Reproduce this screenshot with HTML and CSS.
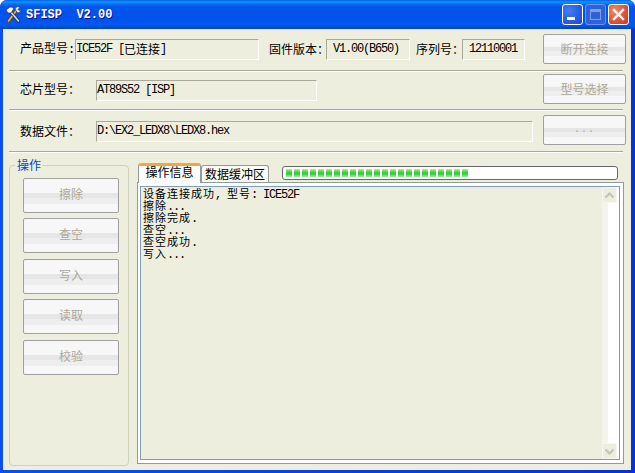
FILE: index.html
```html
<!DOCTYPE html>
<html lang="zh">
<head>
<meta charset="utf-8">
<title>SFISP V2.00</title>
<link rel="stylesheet" href="styles.css">
</head>
<body>
<div class="window">
  <header class="titlebar">
    <svg class="app-icon" width="17" height="17" viewBox="0 0 17 17">
      <path d="M3.5 15 L11 5" stroke="#5a4420" stroke-width="3.2" stroke-linecap="round"/>
      <path d="M3.5 15 L11 5" stroke="#f0b848" stroke-width="1.6" stroke-linecap="round"/>
      <path d="M5 5 L13.5 15" stroke="#2c3858" stroke-width="3.2" stroke-linecap="round"/>
      <path d="M5 5 L13.5 15" stroke="#d8dcea" stroke-width="1.5" stroke-linecap="round"/>
      <path d="M1 4 L5 1 L9 1.5 L8 4 L6 7 L3 7 Z" fill="#f4f4f8" stroke="#38445e" stroke-width=".8"/>
      <path d="M10 3 a3 3 0 0 1 5 -1.5 l-2 2 1 1 2 -1 a3 3 0 0 1 -4 3 Z" fill="#e8ebf4" stroke="#38445e" stroke-width=".8"/>
    </svg>
    <span class="app-title">SFISP  V2.00</span>
    <div class="win-buttons">
      <div class="win-btn win-min"><span class="min-glyph"></span></div>
      <div class="win-btn win-max"><span class="max-glyph"></span></div>
      <div class="win-btn win-close">
        <svg width="13" height="13" viewBox="0 0 13 13"><path d="M2 2 L11 11 M11 2 L2 11" stroke="#fff" stroke-width="2.4" stroke-linecap="square"/></svg>
      </div>
    </div>
  </header>

  <main class="client">
    <section class="row row-a">
      <span class="label w55">产品型号<span class="lat">:</span></span>
      <span class="field w184"><span class="lat">ICE52F [</span>已连接<span class="lat">]</span></span>
      <span class="label w57 ml10">固件版本：</span>
      <span class="field w84 pad6"><span class="lat">V1.00(B650)</span></span>
      <span class="label w46 ml6">序列号：</span>
      <span class="field w63 pad6"><span class="lat">12110001</span></span>
      <button class="btn btn-top" disabled>断开连接</button>
    </section>
    <hr class="sep">
    <section class="row row-b">
      <span class="label w76">芯片型号：</span>
      <span class="field w221"><span class="lat">AT89S52 [ISP]</span></span>
      <button class="btn btn-top" disabled>型号选择</button>
    </section>
    <hr class="sep">
    <section class="row row-c">
      <span class="label w76">数据文件：</span>
      <span class="field w437"><span class="lat">D:\EX2_LEDX8\LEDX8.hex</span></span>
      <button class="btn btn-top btn-dots" disabled>...</button>
    </section>
    <hr class="sep">

    <section class="lower">
      <fieldset class="group">
        <legend class="group-title">操作</legend>
        <button class="btn btn-op" disabled>擦除</button>
        <button class="btn btn-op" disabled>查空</button>
        <button class="btn btn-op" disabled>写入</button>
        <button class="btn btn-op" disabled>读取</button>
        <button class="btn btn-op" disabled>校验</button>
      </fieldset>

      <div class="tabs">
        <div class="tab-strip">
          <div class="tab tab-active">操作信息</div>
          <div class="tab tab-idle">数据缓冲区</div>
          <div class="progress"><div class="progress-fill"></div></div>
        </div>
        <div class="tab-panel">
          <div class="log-box">
            <div class="log-text">
              <div class="log-line">设备连接成功<span class="lat">, </span>型号<span class="lat">: ICE52F</span></div>
              <div class="log-line">擦除<span class="lat">...</span></div>
              <div class="log-line">擦除完成<span class="lat">.</span></div>
              <div class="log-line">查空<span class="lat">...</span></div>
              <div class="log-line">查空成功<span class="lat">.</span></div>
              <div class="log-line">写入<span class="lat">...</span></div>
            </div>
            <div class="scrollbar">
              <div class="sb-btn"><svg width="11" height="7" viewBox="0 0 11 7"><path d="M1.5 5.5 L5.5 1.5 L9.5 5.5" fill="none" stroke="#c4c3b8" stroke-width="2.2"/></svg></div>
              <div class="sb-track"></div>
              <div class="sb-btn"><svg width="11" height="7" viewBox="0 0 11 7"><path d="M1.5 1.5 L5.5 5.5 L9.5 1.5" fill="none" stroke="#c4c3b8" stroke-width="2.2"/></svg></div>
            </div>
          </div>
        </div>
      </div>
    </section>
  </main>
</div>
</body>
</html>
```
FILE: styles.css
```css
* { box-sizing: border-box; }
html, body { margin: 0; padding: 0; background: #fff; }
body { width: 635px; height: 473px; overflow: hidden; }

.window {
  width: 635px;
  height: 473px;
  display: flex;
  flex-direction: column;
  border-radius: 7px 7px 0 0;
  overflow: hidden;
  background: linear-gradient(90deg, #0a4ff0 0, #0831d9 100%);
  font: 12px/12px "Noto Sans CJK SC", "Liberation Sans", sans-serif;
  color: #000;
}

.titlebar {
  height: 29px;
  flex: none;
  display: flex;
  align-items: center;
  padding: 0 6px 0 5px;
  background: linear-gradient(180deg, #0a5fe0 0, #0997ff 2px, #0a6cf0 4px, #0055ea 7px, #0053ee 20px, #0058ec 25px, #0050d8 27px, #003dc8 29px);
}
.app-icon { margin-right: 4px; }
.app-title {
  font: bold 12px/14px "Liberation Mono", monospace;
  color: #fff;
  white-space: pre;
  text-shadow: 1px 1px 0 #0f1089;
}
.win-buttons { margin-left: auto; display: flex; gap: 2px; }
.win-btn {
  width: 21px;
  height: 21px;
  border: 1px solid #fff;
  border-radius: 3px;
  display: flex;
  align-items: center;
  justify-content: center;
  background: radial-gradient(circle at 30% 30%, #3f7df5, #2a5ce0 60%, #1f48c8);
}
.win-min { align-items: flex-end; justify-content: flex-start; }
.min-glyph { width: 8px; height: 3px; background: #fff; margin: 0 0 4px 4px; }
.win-max { background: #2f62d8; border-color: #6f94ea; }
.max-glyph { width: 11px; height: 11px; border: 1px solid #7f9fe8; border-top-width: 3px; }
.win-close { background: radial-gradient(circle at 30% 30%, #ec8a68, #e0553a 55%, #c43a1c); }

.client {
  flex: 1;
  margin: 0 4px 3px 3px;
  padding: 0 5px 0 6px;
  background: #eeeede;
  display: flex;
  flex-direction: column;
}

.row { display: flex; align-items: center; padding-left: 11px; }
.row-a { padding-top: 5px; padding-bottom: 6px; }
.row-b { padding-top: 2px; padding-bottom: 5px; }
.row-c { padding-top: 4px; padding-bottom: 6px; }
.row-b .field, .row-c .field { margin-top: 2px; }
.row-c .label { margin-top: 2px; }

.sep {
  flex: none;
  width: 614px;
  height: 2px;
  margin: 0;
  border: 0;
  border-top: 1px solid #aca899;
  border-bottom: 1px solid #fff;
}

.label { flex: none; white-space: nowrap; }
.w55 { width: 55px; }
.w57 { width: 57px; }
.w46 { width: 46px; }
.w76 { width: 76px; }
.ml10 { margin-left: 10px; }
.ml6 { margin-left: 6px; }

.lat {
  font-family: "Liberation Mono", monospace;
  font-size: 12px;
  letter-spacing: -1.2px;
  white-space: pre;
}

.field {
  flex: none;
  height: 21px;
  display: flex;
  align-items: center;
  padding-left: 0;
  border: 1px solid;
  border-color: #aca899 #fff #fff #aca899;
  white-space: nowrap;
}
.w184 { width: 184px; }
.w84 { width: 84px; }
.w63 { width: 63px; }
.w221 { width: 221px; }
.w437 { width: 437px; }
.pad6 { padding-left: 6px; }

.btn {
  display: block;
  padding: 0;
  border: 1px solid #a0a0a0;
  border-radius: 2px;
  font: inherit;
  color: #aca899;
  background: linear-gradient(180deg, #f7f7f7 0 42%, #e6e6e6 42% 58%, #eeeeee 58% 75%, #f7f7f7 75%);
}
.btn-top { width: 83px; height: 30px; margin-left: auto; flex: none; }
.btn-dots { font-family: "Liberation Mono", monospace; letter-spacing: 1px; font-size: 10px; }
.btn-op { width: 96px; height: 35px; margin-top: 6px; padding-bottom: 3px; }
.btn-op:first-of-type { margin-top: 0; }
.btn-op:nth-of-type(2), .btn-op:nth-of-type(4) { margin-top: 5px; }

.lower { flex: 1; display: flex; padding-top: 6px; padding-bottom: 4px; }

.group {
  flex: none;
  width: 120px;
  margin: 0;
  padding: 7px 0 0 13px;
  border: 1px solid #d0d0bf;
  border-radius: 4px;
  min-inline-size: 0;
}
.group-title {
  padding: 0 2px;
  margin-left: -8px;
  color: #0046d5;
  line-height: 12px;
}

.tabs { flex: 1; margin: 4px 2px 2px 8px; display: flex; flex-direction: column; min-height: 0; }

.tab-strip { height: 19px; flex: none; display: flex; align-items: flex-end; padding-left: 1px; }
.tab {
  height: 17px;
  text-align: center;
  line-height: 16px;
  border: 1px solid #919b9c;
  border-bottom: 0;
  border-radius: 3px 3px 0 0;
  background: #fafaf6;
}
.tab-active {
  width: 63px;
  height: 20px;
  line-height: 12px;
  border-top: 3px solid #f2a93a;
  background: #fdfdfd;
  position: relative;
  z-index: 1;
  margin-bottom: -1px;
}
.tab-idle { width: 68px; }

.progress {
  width: 336px;
  height: 14px;
  margin-left: 13px;
  margin-bottom: 2px;
  padding: 2px 3px;
  border: 1px solid #686868;
  border-radius: 3px;
  background: #fff;
  align-self: flex-end;
}
.progress-fill {
  width: 182px;
  height: 8px;
  background:
    repeating-linear-gradient(90deg, transparent 0 6px, #fff 6px 8px),
    linear-gradient(180deg, #b4f0b4 0, #3edb3e 35%, #2cd02c 60%, #a0eca0 100%);
}

.tab-panel {
  flex: 1;
  min-height: 0;
  padding: 3px 3px 3px 2px;
  border: 1px solid #919b9c;
  background: #fff;
}
.log-box {
  height: 100%;
  display: flex;
  padding-left: 2px;
  border: 1px solid #7f9db9;
  background: #eeeede;
}
.log-text { flex: 1; }
.log-line { height: 12px; font-size: 11px; letter-spacing: 1px; white-space: nowrap; }

.scrollbar {
  flex: none;
  width: 17px;
  display: flex;
  flex-direction: column;
  background: linear-gradient(90deg, #f4f3ec 0 6px, #fff 6px);
}
.sb-track { flex: 1; }
.sb-btn {
  flex: none;
  width: 15px;
  height: 16px;
  display: flex;
  align-items: center;
  justify-content: center;
  background: #eeeede;
  border: 1px solid #f7f6ef;
  border-radius: 2px;
}
```
